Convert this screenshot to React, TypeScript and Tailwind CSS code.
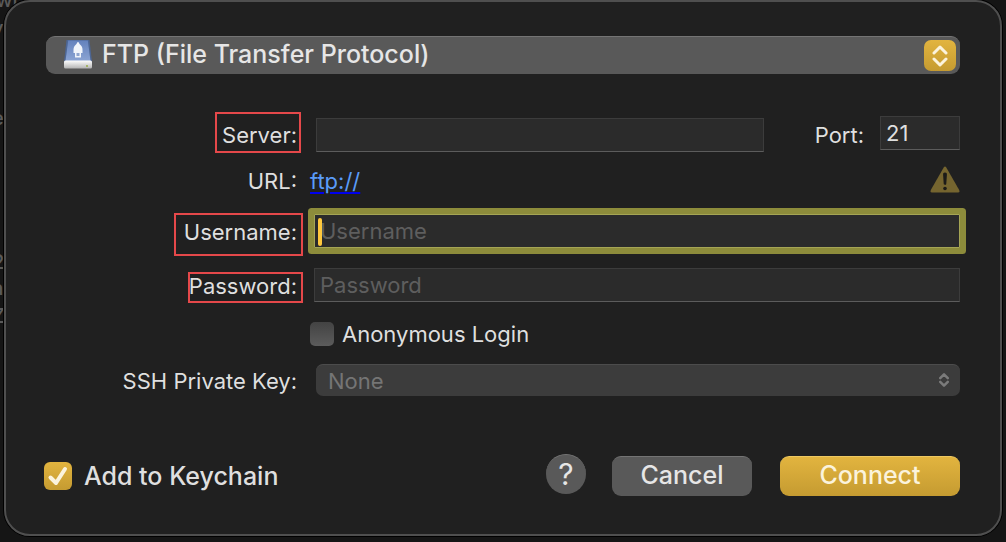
import React, { useState } from "react";

interface LabelProps {
  htmlFor: string;
  text: string;
  // inset classes of the red marker drawn around the label
  marker?: string;
}

const FieldLabel = ({ htmlFor, text, marker }: LabelProps) => (
  <label
    htmlFor={htmlFor}
    className="relative block justify-self-end leading-6 whitespace-nowrap"
  >
    {text}
    {marker && (
      <span
        className={`pointer-events-none absolute border-2 border-[#e5484a] ${marker}`}
      />
    )}
  </label>
);

const Chevrons = ({ className }: { className: string }) => (
  <svg
    viewBox="0 0 16 22"
    fill="none"
    stroke="currentColor"
    strokeLinecap="round"
    strokeLinejoin="round"
    className={className}
  >
    <path d="M2 8 8 2l6 6M2 14l6 6 6-6" />
  </svg>
);

const DriveIcon = () => (
  <svg
    viewBox="0 0 28 30"
    className="pointer-events-none absolute top-[3px] left-[18px] h-[30px] w-7"
  >
    <defs>
      <linearGradient id="drive-top" x1="0" y1="0" x2="0" y2="1">
        <stop offset="0" stopColor="#6482bd" />
        <stop offset="1" stopColor="#8ba4d3" />
      </linearGradient>
      <linearGradient id="drive-front" x1="0" y1="0" x2="0" y2="1">
        <stop offset="0" stopColor="#ffffff" />
        <stop offset="0.3" stopColor="#e8e8e8" />
        <stop offset="1" stopColor="#b4b4b4" />
      </linearGradient>
    </defs>
    <path d="M2.500 1h23L28 23H0z" fill="#4d6694" />
    <path d="M4.200 1.500h19.600L26.500 22H1.500z" fill="url(#drive-top)" />
    <path
      d="M14 3c1 0 1 1.500 2 2.500 2 1.500 2.500 3.500 2.500 5.500v3h-1.500v4.500h-6V14H9.500v-3c0-2 .5-4 2.500-5.500 1-1 1-2.500 2-2.500z"
      fill="#f0f4fa"
    />
    <path d="M12.500 14h3v3h-3z" fill="#8fa5cf" />
    <rect x="0" y="21.500" width="28" height="8" rx="1.500" fill="url(#drive-front)" />
    <circle cx="23" cy="27" r="0.900" fill="#8fa83a" />
  </svg>
);

const WarningIcon = () => (
  <svg
    viewBox="0 0 30 27"
    className="mb-1 h-[27px] w-[30px]"
    role="img"
    aria-label="Warning"
  >
    <path
      d="M13.700 1.500Q15 -0.500 16.300 1.500L29.200 24Q30 26.500 28 26.500H2Q0 26.500 0.800 24z"
      fill="#75652f"
    />
    <path
      d="M15 6.500c1.400 0 2 .9 1.900 2.200l-.6 9c-.1 1.600-2.500 1.600-2.600 0l-.6-9C13 7.400 13.600 6.500 15 6.500z"
      fill="#1c1b18"
    />
    <circle cx="15" cy="22.500" r="1.800" fill="#1c1b18" />
  </svg>
);

const inputClass =
  "h-[34px] min-w-0 border border-[#3c3c3c] border-b-[#5c5c5c] bg-[#2b2b2b] px-[5px] text-[#dfdfdf] outline-none placeholder:text-[#5e5e5e]";

const Backdrop = () => (
  <div
    aria-hidden="true"
    className="absolute inset-0 overflow-hidden text-[20px] leading-6 font-medium text-[#5a5a5a]"
  >
    <span className="absolute -top-3 -left-1">wri</span>
    <span className="absolute top-4 -left-2">v</span>
    <span className="absolute top-[106px] -left-2">e</span>
    <span className="absolute top-[250px] -left-2">2</span>
    <span className="absolute top-[276px] -left-2">a</span>
    <span className="absolute top-[304px] -left-2">Z</span>
  </div>
);

const App = () => {
  const [port, setPort] = useState("21");
  const [anonymous, setAnonymous] = useState(false);
  const [keychain, setKeychain] = useState(true);

  return (
    <div className="relative min-h-screen bg-[#151515] px-1 pb-1.5 font-['Inter','Liberation_Sans',sans-serif] text-[22px] text-[#dfdfdf]">
      <Backdrop />
      <form
        onSubmit={(e) => e.preventDefault()}
        className="relative rounded-[26px] border-2 border-[#4f4f4f] bg-[#202020] px-10 pt-[34px] pb-[38px] shadow-[0_0_0_1px_#000]"
      >
        <div className="relative">
          <select
            aria-label="Protocol"
            className="block h-[38px] w-full appearance-none rounded-[9px] border-t border-[#747474] bg-[#595959] pb-[3px] pl-14 text-[25px] leading-8 font-medium text-[#e6e6e6] outline-none"
          >
            <option>FTP (File Transfer Protocol)</option>
          </select>
          <DriveIcon />
          <span className="pointer-events-none absolute top-1 right-1 flex h-[31px] w-8 items-center justify-center rounded-[7px] bg-linear-to-b from-[#e2b43f] to-[#c59b31] text-[#fbf3dc]">
            <Chevrons className="h-[22px] w-4 stroke-3" />
          </span>
        </div>

        <div className="mt-11 grid grid-cols-[251px_minmax(0,1fr)] items-center gap-x-[13px]">
          <FieldLabel
            htmlFor="server"
            text="Server:"
            marker="-top-[11px] -right-1 -bottom-1.5 -left-[7px]"
          />
          <div className="flex h-[34px] items-center pl-1.5">
            <input id="server" type="text" className={`${inputClass} flex-1`} />
            <label htmlFor="port" className="ml-[51px] leading-6">
              Port:
            </label>
            <input
              id="port"
              type="text"
              value={port}
              onChange={(e) => setPort(e.target.value)}
              className={`${inputClass} mb-1 ml-4 w-20`}
            />
          </div>

          <span className="mt-4 justify-self-end leading-6">URL:</span>
          <div className="mt-4 flex h-[26px] items-center justify-between">
            <a
              href="ftp://"
              className="leading-6 text-[#5a9cf8] underline decoration-[#0000ee] decoration-2 underline-offset-3"
            >
              ftp://
            </a>
            <WarningIcon />
          </div>

          <div className="mt-5 justify-self-end pt-0.5">
            <FieldLabel
              htmlFor="username"
              text="Username:"
              marker="-top-[7px] -right-1.5 -bottom-3 -left-2.5"
            />
          </div>
          <div className="relative mt-5 flex pl-1">
            <input
              id="username"
              type="text"
              placeholder="Username"
              className="h-[34px] min-w-0 flex-1 rounded-[1px] border border-[#a5a554] bg-[#2b2b2b] px-[5px] ring-6 ring-[#8d8c3b] outline-none placeholder:text-[#5e5e5e]"
            />
            <span className="pointer-events-none absolute top-1 left-2 h-7 w-1 rounded-full bg-[#ffc83d]" />
          </div>

          <div className="mt-5 justify-self-end pt-0.5">
            <FieldLabel
              htmlFor="password"
              text="Password:"
              marker="-top-0.5 -right-1.5 -bottom-[5px] -left-px"
            />
          </div>
          <div className="mt-5 flex pl-1">
            <input
              id="password"
              type="password"
              placeholder="Password"
              className={`${inputClass} flex-1`}
            />
          </div>

          <div className="col-start-2 mt-5 flex h-6 items-center gap-2">
            <input
              id="anonymous"
              type="checkbox"
              checked={anonymous}
              onChange={(e) => setAnonymous(e.target.checked)}
              className="size-6 appearance-none rounded-[5px] bg-linear-to-b from-[#434343] to-[#5c5c5c] checked:from-[#e2b43f] checked:to-[#c59b31]"
            />
            <label htmlFor="anonymous" className="leading-6">
              Anonymous Login
            </label>
          </div>

          <div className="mt-[18px] justify-self-end pt-0.5">
            <FieldLabel htmlFor="ssh-key" text="SSH Private Key:" />
          </div>
          <div className="relative mt-[18px] pl-1.5">
            <select
              id="ssh-key"
              disabled
              className="block h-8 w-full appearance-none rounded-[7px] border-t border-[#4c4c4c] bg-[#3c3c3c] pl-3 text-[#757575] opacity-100"
            >
              <option>None</option>
            </select>
            <Chevrons className="pointer-events-none absolute top-2 right-[11px] h-4 w-2.5 stroke-4 text-[#7b7b7b]" />
          </div>
        </div>

        <div className="mt-[60px] flex h-10 items-center text-[25px] font-medium">
          <span className="relative -ml-0.5 flex">
            <input
              id="keychain"
              type="checkbox"
              checked={keychain}
              onChange={(e) => setKeychain(e.target.checked)}
              className="size-7 appearance-none rounded-[6px] bg-[#505050] bg-linear-to-b checked:from-[#e2b43f] checked:to-[#c59b31]"
            />
            {keychain && (
              <svg
                viewBox="0 0 28 28"
                fill="none"
                className="pointer-events-none absolute inset-0 stroke-[#fbf3dc] stroke-4"
                strokeLinecap="round"
                strokeLinejoin="round"
              >
                <path d="M6.500 15.500 12 21 21 7" />
              </svg>
            )}
          </span>
          <label htmlFor="keychain" className="ml-3 leading-8">
            Add to Keychain
          </label>
          <button
            type="button"
            aria-label="Help"
            className="mb-1 ml-auto flex size-10 items-center justify-center rounded-full border-t border-[#747474] bg-[#595959] pb-0.5 text-[30px] leading-8 font-normal text-[#e6e6e6]"
          >
            ?
          </button>
          <button
            type="button"
            className="ml-[26px] h-10 w-[140px] rounded-[9px] border-t border-[#747474] bg-[#595959] pb-1 leading-8 text-[#e6e6e6]"
          >
            Cancel
          </button>
          <button
            type="submit"
            className="ml-7 h-10 w-[180px] rounded-[9px] border-t border-[#edc862] bg-linear-to-b from-[#e2b43f] to-[#c59b31] pb-1 leading-8 text-[#fbf3dc]"
          >
            Connect
          </button>
        </div>
      </form>
    </div>
  );
};

export default App;
